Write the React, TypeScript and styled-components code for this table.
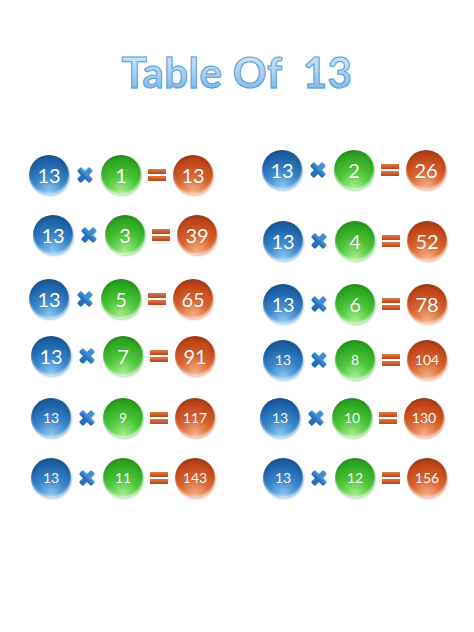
import * as React from 'react';
import styled, { createGlobalStyle, css } from 'styled-components';

const GlobalStyle = createGlobalStyle`
  html, body {
    margin: 0;
    padding: 0;
    background: #fff;
  }
  body {
    font-family: Lato, 'Open Sans', 'Liberation Sans', sans-serif;
  }
`;

const Page = styled.div`
  width: 474px;
  height: 632px;
  padding-top: 47px;
  box-sizing: border-box;
`;

const Title = styled.h1`
  margin: 0;
  text-align: center;
  font-size: 42px;
  font-weight: 700;
  line-height: 50px;
  letter-spacing: 0.4px;
  white-space: pre;
  color: transparent;
  background: linear-gradient(#d8ecfb 0%, #a9d2f3 50%, #6eaee4 100%);
  -webkit-background-clip: text;
  background-clip: text;
  -webkit-text-stroke: 1px #5e9fd8;
`;

const Columns = styled.div`
  display: grid;
  grid-template-columns: 233px 233px;
  padding-left: 29px;
  margin-top: 58px;
`;

const Column = styled.div`
  display: flex;
  flex-direction: column;
`;

const Row = styled.div<{ $top: number; $left: number }>`
  display: flex;
  align-items: center;
  gap: 7px;
  margin-top: ${p => p.$top}px;
  margin-left: ${p => p.$left}px;
`;

type Tone = 'blue' | 'green' | 'orange';

const tones = {
  blue: css`
    background: radial-gradient(circle at 50% 92%, #8cc8f0 0%, #3b86cc 38%, #1f63aa 70%, #1a568f 100%);
    box-shadow: inset 0 -2px 2px rgba(255, 255, 255, 0.55), inset 0 2px 3px rgba(0, 0, 0, 0.15), 1px 1px 2px rgba(90, 150, 210, 0.5);
  `,
  green: css`
    background: radial-gradient(circle at 50% 92%, #a6ec8e 0%, #4cc53a 40%, #2ea822 72%, #268f1c 100%);
    box-shadow: inset 0 -2px 2px rgba(255, 255, 255, 0.6), inset 0 2px 3px rgba(0, 0, 0, 0.12), 1px 1px 2px rgba(90, 190, 90, 0.5);
  `,
  orange: css`
    background: radial-gradient(circle at 50% 92%, #f4b08a 0%, #d9632d 40%, #c0461a 72%, #a33a14 100%);
    box-shadow: inset 0 -2px 2px rgba(255, 255, 255, 0.55), inset 0 2px 3px rgba(0, 0, 0, 0.15), 1px 1px 2px rgba(210, 120, 80, 0.5);
  `,
};

const Ball = styled.div<{ $tone: Tone; $small: boolean }>`
  width: 40px;
  height: 40px;
  border-radius: 50%;
  flex: none;
  display: flex;
  align-items: center;
  justify-content: center;
  color: #fff;
  font-size: ${p => (p.$small ? 14 : 20)}px;
  line-height: 1;
  text-shadow: 0 0 1px rgba(0, 0, 0, 0.25);
  ${p => tones[p.$tone]}
`;

const Sign = styled.svg`
  width: 18px;
  height: 18px;
  flex: none;
  display: block;
`;

function Times() {
  return (
    <Sign viewBox="0 0 18 18">
      <defs>
        <linearGradient id="tx" x1="0" y1="0" x2="0" y2="1">
          <stop offset="0" stopColor="#4a97dd" />
          <stop offset="1" stopColor="#1f66b0" />
        </linearGradient>
      </defs>
      <g transform="rotate(45 9 9)" fill="url(#tx)">
        <rect x="6.1" y="0.3" width="5.8" height="17.4" rx="1.6" />
        <rect x="0.3" y="6.1" width="17.4" height="5.8" rx="1.6" />
      </g>
    </Sign>
  );
}

function Equals() {
  return (
    <Sign viewBox="0 0 18 18">
      <defs>
        <linearGradient id="eq" x1="0" y1="0" x2="0" y2="1">
          <stop offset="0" stopColor="#e07a45" />
          <stop offset="1" stopColor="#b8441a" />
        </linearGradient>
      </defs>
      <rect x="0" y="3" width="18" height="5" fill="url(#eq)" />
      <rect x="0" y="10" width="18" height="5" fill="url(#eq)" />
    </Sign>
  );
}

type Eq = { n: number; top: number; left: number };

const leftCol: Eq[] = [
  { n: 1, top: 0, left: 0 },
  { n: 3, top: 20, left: 4 },
  { n: 5, top: 24, left: 0 },
  { n: 7, top: 17, left: 2 },
  { n: 9, top: 22, left: 2 },
  { n: 11, top: 20, left: 2 },
];

const rightCol: Eq[] = [
  { n: 2, top: -5, left: 0 },
  { n: 4, top: 31, left: 1 },
  { n: 6, top: 23, left: 1 },
  { n: 8, top: 16, left: 1 },
  { n: 10, top: 18, left: -2 },
  { n: 12, top: 20, left: 1 },
];

function Equation({ n, top, left }: Eq) {
  const small = n >= 8;
  return (
    <Row $top={top} $left={left}>
      <Ball $tone="blue" $small={small}>13</Ball>
      <Times />
      <Ball $tone="green" $small={small}>{n}</Ball>
      <Equals />
      <Ball $tone="orange" $small={small}>{13 * n}</Ball>
    </Row>
  );
}

export default function App() {
  return (
    <Page>
      <GlobalStyle />
      <Title>{'Table Of  13'}</Title>
      <Columns>
        <Column>
          {leftCol.map(e => (
            <Equation key={e.n} {...e} />
          ))}
        </Column>
        <Column>
          {rightCol.map(e => (
            <Equation key={e.n} {...e} />
          ))}
        </Column>
      </Columns>
    </Page>
  );
}
